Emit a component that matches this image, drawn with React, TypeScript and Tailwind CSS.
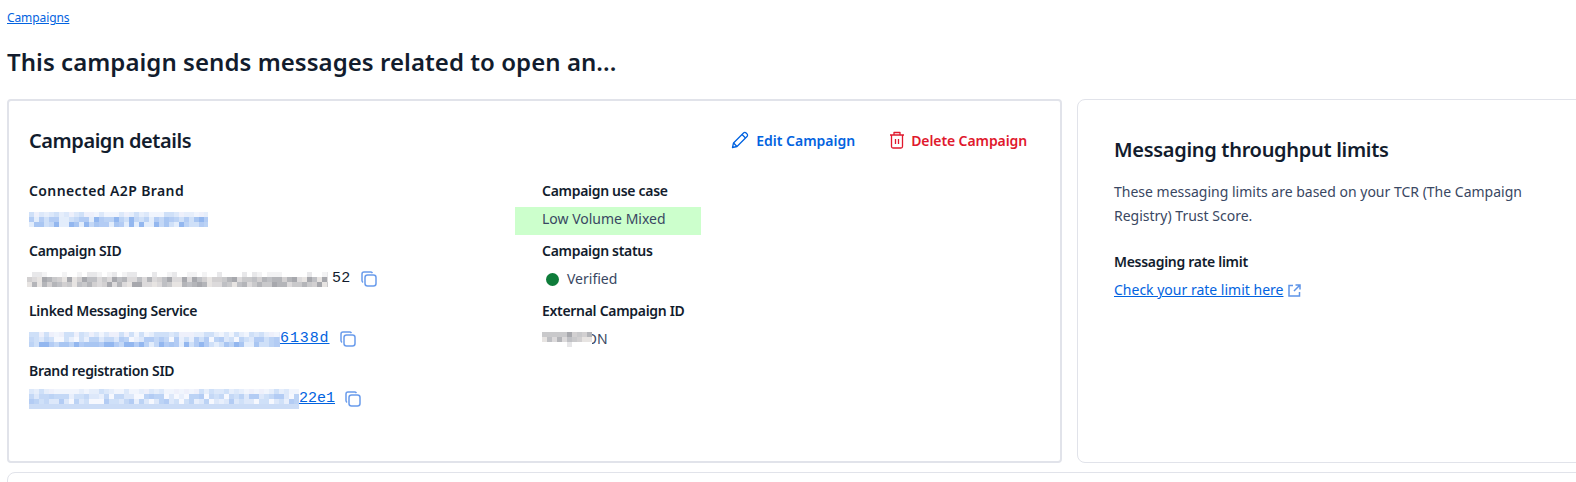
import React from "react";

const FONT = "font-['Noto_Sans',sans-serif]";

function Pixels({ w, rows, seed, size = 5, className = "" }: { w: number; rows: string[][]; seed: number; size?: number; className?: string }) {
  const cells: React.ReactElement[] = [];
  let s = seed;
  const next = () => {
    s = (s * 9301 + 49297) % 233280;
    return s / 233280;
  };
  rows.forEach((palette, r) => {
    for (let c = 0; c * size < w; c++) {
      const fill = palette[Math.floor(next() * palette.length)];
      cells.push(<rect key={`${r}-${c}`} x={c * size} y={r * size} width={size} height={size} fill={fill} />);
    }
  });
  const h = rows.length * size;
  return (
    <svg width={w} height={h} viewBox={`0 0 ${w} ${h}`} className={`block shrink-0 ${className}`} shapeRendering="crispEdges">
      {cells}
    </svg>
  );
}

const BLUE = ["#a9c6f2", "#bcd3f5", "#cfe0f8", "#93b7ef", "#e3edfb", "#b3ccf4", "#c4d8f6"];
const BLUE_SOFT = ["#bcd3f5", "#cfe0f8", "#dde8fa", "#b3ccf4", "#e8effc", "#c4d8f6", "#f6f8fe"];
const BLUE_TOP = ["#e6eefb", "#dce8fa", "#f1f5fd", "#cfe0f8", "#eef0fb"];
const GREY = ["#c9c9cb", "#b4b5b9", "#dcdadb", "#a7a8ad", "#e7e4e2", "#bfc0c4", "#d2d0d1"];
const GREY_TOP = ["#ffffff", "#ffffff", "#ffffff", "#f3f3f4", "#e8e8ea"];

function CopyIcon() {
  return (
    <svg width="16" height="16" viewBox="0 0 16 16" fill="none" stroke="#6a9cec" strokeWidth="1.5" className="shrink-0">
      <rect x="4" y="4" width="11" height="11" rx="2.500" />
      <path d="M2 11.500C1.400 11 1 10.400 1 9.600V3a2 2 0 0 1 2-2h6.600c.8 0 1.400.4 1.900 1" />
    </svg>
  );
}

function Label({ children, wide }: { children: React.ReactNode; wide?: boolean }) {
  return (
    <div className={`h-[20px] text-[14px] leading-[20px] font-semibold text-[#121c2d] ${wide ? "tracking-[0.4px]" : "tracking-[-0.3px]"}`}>
      {children}
    </div>
  );
}

function Row({ label, wide, children }: { label: string; wide?: boolean; children: React.ReactNode }) {
  return (
    <div className="h-[60px]">
      <Label wide={wide}>{label}</Label>
      <div className="mt-[6px] flex h-[24px] items-center">{children}</div>
    </div>
  );
}

export default function App() {
  return (
    <div className={`${FONT} h-[482px] w-[1576px] overflow-hidden bg-white pl-[7px] text-[#121c2d]`}>
      <div className="h-[44px] pt-[4px]">
        <a className="text-[12px] leading-[18px] tracking-[-0.1px] text-[#0263e0] underline">Campaigns</a>
      </div>
      <h1 className="h-[55px] text-[24px] leading-[36px] font-semibold tracking-[0.05px] text-[#121c2d]">
        This campaign sends messages related to open an...
      </h1>
      <div className="flex w-[1630px] gap-[15px]">
        <section className="h-[364px] w-[1055px] shrink-0 rounded-[4px] border-2 border-[#e1e3ea] pt-[20px] pl-[20px]">
          <div className="flex h-[40px] items-center">
            <h2 className="text-[20px] leading-[28px] font-semibold tracking-[-0.45px]">Campaign details</h2>
            <div className="ml-auto -mt-[2px] flex items-center pr-[33px]">
              <button className="flex items-center gap-[7px] text-[14px] font-semibold text-[#0263e0]">
                <svg width="18" height="18" viewBox="0 0 18 18" fill="none" stroke="#0263e0" strokeWidth="1.3" strokeLinejoin="round">
                  <path d="M1.500 16.500l1-4.500L12.500 2a1.800 1.800 0 0 1 2.600 0l.9.9a1.800 1.800 0 0 1 0 2.600L6 15.500l-4.500 1z" />
                  <path d="M11 3.500L14.500 7M2.600 12l3.400 3.500" />
                </svg>
                Edit Campaign
              </button>
              <button className="ml-[34px] flex items-center gap-[6px] text-[14px] font-semibold tracking-[-0.1px] text-[#e0182d]">
                <svg width="16" height="18" viewBox="0 0 16 18" fill="none" stroke="#e0182d" strokeWidth="1.3" strokeLinejoin="round">
                  <path d="M1 4h14M5 4V1.500h6V4M2.500 4v11.500a1.500 1.500 0 0 0 1.500 1.500h8a1.500 1.500 0 0 0 1.500-1.500V4M6.500 8v5M9.500 8v5" />
                </svg>
                Delete Campaign
              </button>
            </div>
          </div>
          <div className="mt-[20px] grid grid-cols-[513px_1fr]">
            <div>
              <Row label="Connected A2P Brand" wide>
                <Pixels w={179} rows={[BLUE_TOP, BLUE, BLUE]} seed={11} />
              </Row>
              <Row label="Campaign SID">
                <Pixels w={301} rows={[GREY_TOP, GREY, GREY]} seed={23} className="-ml-[2px]" />
                <span className="ml-[4px] font-['Liberation_Mono',monospace] text-[15px] leading-[20px] tracking-[0.2px] text-[#121c2d]">52</span>
                <span className="ml-[11px]"><CopyIcon /></span>
              </Row>
              <Row label="Linked Messaging Service">
                <Pixels w={251} rows={[BLUE_TOP, BLUE_SOFT, BLUE]} seed={37} />
                <span className="font-['Liberation_Mono',monospace] text-[15px] leading-[20px] tracking-[0.9px] text-[#0263e0] underline">6138d</span>
                <span className="ml-[10px]"><CopyIcon /></span>
              </Row>
              <Row label="Brand registration SID">
                <Pixels w={270} rows={[BLUE_TOP, BLUE_SOFT, BLUE_SOFT, ["#cbdcf6"]]} seed={53} />
                <span className="font-['Liberation_Mono',monospace] text-[15px] leading-[20px] text-[#0263e0] underline">22e1</span>
                <span className="ml-[10px]"><CopyIcon /></span>
              </Row>
            </div>
            <div>
              <Row label="Campaign use case">
                <div className="-ml-[27px] mt-[4px] flex h-[28px] w-[186px] shrink-0 items-center bg-[#ccffcc] pb-[6px] pl-[27px] text-[14px] text-[#394762]">
                  Low Volume Mixed
                </div>
              </Row>
              <Row label="Campaign status">
                <span className="ml-[4px] h-[13px] w-[13px] rounded-full bg-[#0e7c3a]" />
                <span className="ml-[8px] -mt-[2px] text-[14px] text-[#394762]">Verified</span>
              </Row>
              <Row label="External Campaign ID">
                <Pixels w={50} rows={[GREY, GREY, ["#ffffff", "#ffffff", "#ffffff", "#e6e6e8"]]} seed={71} className="relative z-10" />
                <span className="-ml-[6px] -mt-[2px] text-[14px] text-[#394762]">ON</span>
              </Row>
            </div>
          </div>
        </section>
        <section className="h-[364px] w-[540px] shrink-0 rounded-[8px] border border-[#e1e3ea] pt-[36px] pl-[36px]">
          <h2 className="text-[20px] leading-[28px] font-semibold tracking-[-0.3px]">Messaging throughput limits</h2>
          <p className="mt-[16px] w-[420px] text-[14px] leading-[24px] text-[#394762]">
            These messaging limits are based on your TCR (The Campaign Registry) Trust Score.
          </p>
          <div className="mt-[24px] text-[14px] leading-[20px] font-semibold tracking-[-0.3px]">Messaging rate limit</div>
          <div className="mt-[8px] flex items-center gap-[5px] text-[14px] leading-[20px]">
            <a className="text-[#0263e0] underline">Check your rate limit here</a>
            <svg width="13" height="13" viewBox="0 0 13 13" fill="none" stroke="#5e94e8" strokeWidth="1.500">
              <path d="M5 1.500H1v10.500h10.500V8M7.500 1H12v4.500M12 1L6 7" />
            </svg>
          </div>
        </section>
      </div>
      <div className="mt-[9px] h-[40px] w-[1630px] rounded-t-[8px] border border-[#e1e3ea]" />
    </div>
  );
}
